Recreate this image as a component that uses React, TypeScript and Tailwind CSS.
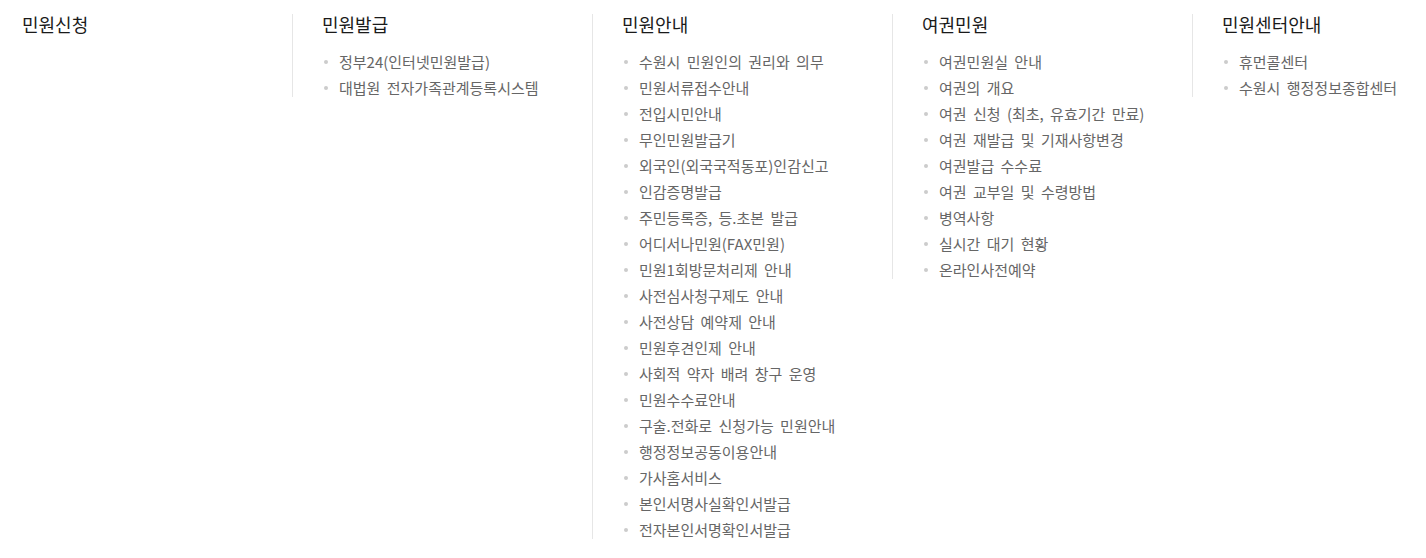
import React from "react";

const columns: { title: string; items: string[] }[] = [
  { title: "민원신청", items: [] },
  { title: "민원발급", items: ["정부24(인터넷민원발급)", "대법원 전자가족관계등록시스템"] },
  {
    title: "민원안내",
    items: [
      "수원시 민원인의 권리와 의무",
      "민원서류접수안내",
      "전입시민안내",
      "무인민원발급기",
      "외국인(외국국적동포)인감신고",
      "인감증명발급",
      "주민등록증, 등.초본 발급",
      "어디서나민원(FAX민원)",
      "민원1회방문처리제 안내",
      "사전심사청구제도 안내",
      "사전상담 예약제 안내",
      "민원후견인제 안내",
      "사회적 약자 배려 창구 운영",
      "민원수수료안내",
      "구술.전화로 신청가능 민원안내",
      "행정정보공동이용안내",
      "가사홈서비스",
      "본인서명사실확인서발급",
      "전자본인서명확인서발급",
    ],
  },
  {
    title: "여권민원",
    items: [
      "여권민원실 안내",
      "여권의 개요",
      "여권 신청 (최초, 유효기간 만료)",
      "여권 재발급 및 기재사항변경",
      "여권발급 수수료",
      "여권 교부일 및 수령방법",
      "병역사항",
      "실시간 대기 현황",
      "온라인사전예약",
    ],
  },
  { title: "민원센터안내", items: ["휴먼콜센터", "수원시 행정정보종합센터"] },
];

export default function App() {
  return (
    <div
      className="w-[1426px] h-[558px] bg-white flex items-start pl-[22px] pt-[14px]"
      style={{ fontFamily: '"Noto Sans CJK KR", "Noto Sans", sans-serif' }}
    >
      {columns.map((col, i) => (
        <div
          key={col.title}
          className={
            i === 0
              ? "w-[270px] shrink-0"
              : "w-[300px] shrink-0 border-l border-[#e6e6e6] pl-[29px]"
          }
        >
          <h2 className="text-[18px] leading-[20px] text-[#1a1a1a] font-normal">{col.title}</h2>
          {col.items.length > 0 && (
            <ul className="mt-[19px] flex flex-col gap-[8px]">
              {col.items.map((it) => (
                <li
                  key={it}
                  className="flex items-center text-[15px] leading-[18px] text-[#666666] whitespace-nowrap [word-spacing:3px]"
                >
                  <span className="w-[4px] h-[4px] rounded-full bg-[#cccccc] ml-[2px] mr-[11px] shrink-0" />
                  {it}
                </li>
              ))}
            </ul>
          )}
        </div>
      ))}
    </div>
  );
}
